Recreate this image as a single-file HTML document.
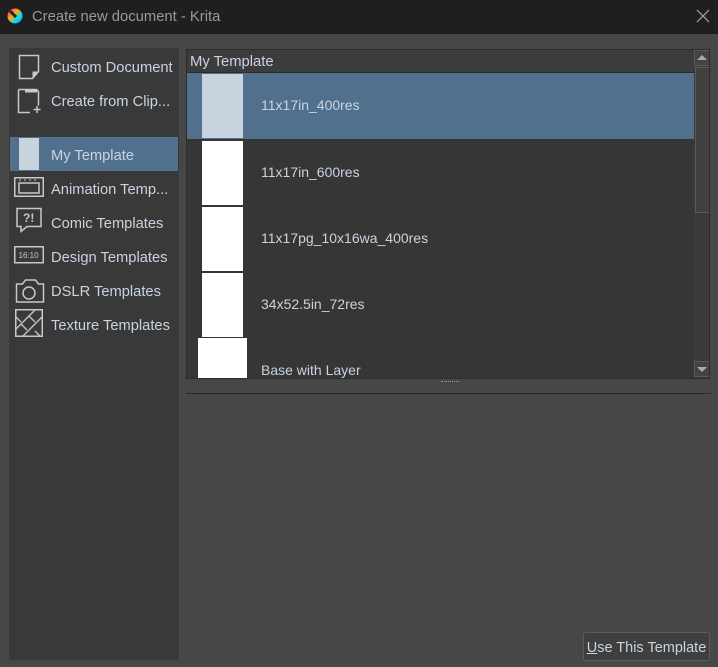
<!DOCTYPE html>
<html><head><style>
*{margin:0;padding:0;box-sizing:border-box}
body{width:718px;height:667px;background:#474747;font-family:"Liberation Sans",sans-serif;font-size:14px;color:#c9d4e0;position:relative;overflow:hidden}
.a{position:absolute}
.title{left:0;top:0;width:718px;height:34px;background:#1f1f1f}
.ttext{left:32px;top:9px;color:#9a9a9a;font-size:14.8px}
.left{left:9px;top:48px;width:170px;height:612px;background:#393939}
.item{position:absolute;left:42px;font-size:14.7px;color:#c9d4e0;margin-top:1px}
.ic{position:absolute}
.list{left:186px;top:49px;width:524px;height:330px;background:#363636;border:1px solid #2c2c2c;overflow:hidden}
.hdr{left:0;top:0;width:508px;height:23px;background:#3c3c3c;border-bottom:1px solid #2a2a2a;padding:4px 3px 0;color:#c9d4e0;font-size:14.8px}
.row{position:absolute;left:0;width:507px;height:66px}
.thumb{position:absolute;left:15px;top:1px;width:41px;height:64px;background:#fff}
.lbl{position:absolute;left:74px;top:24px;color:#c9d4e0}
</style></head><body>
<div class="a title"></div>
<svg class="a" style="left:7px;top:8px" width="16" height="16" viewBox="0 0 16 16"><defs><linearGradient id="g" x1="0" y1="0" x2="1" y2="1"><stop offset="0" stop-color="#f0e"/><stop offset=".4" stop-color="#fa0"/><stop offset=".7" stop-color="#0df"/><stop offset="1" stop-color="#36f"/></linearGradient></defs><circle cx="8" cy="8" r="7.5" fill="url(#g)"/><path d="M3 3 L9 9" stroke="#222" stroke-width="3"/></svg>
<div class="a ttext">Create new document - Krita</div>
<svg class="a" style="left:696px;top:9px" width="14" height="14"><path d="M1 1L13 13M13 1L1 13" stroke="#aaa" stroke-width="1.2"/></svg>

<div class="a left">
<svg class="ic" style="left:9px;top:6px" width="22" height="26"><path d="M1.5 1.5h19v16l-6 7h-13z" fill="none" stroke="#c8c8c8" stroke-width="1.5"/><path d="M20.5 17.5h-6v7" fill="#c8c8c8"/></svg>
<div class="item" style="top:11px">Custom Document</div>
<svg class="ic" style="left:8px;top:40px" width="26" height="26"><path d="M1.5 1.5h18l2 2v14M13 24.5h-11.5v-23" fill="none" stroke="#c8c8c8" stroke-width="1.5"/><path d="M8 1.5h12v3h-12z" fill="#c8c8c8"/><path d="M20 18v7M16.5 21.5h7" stroke="#c8c8c8" stroke-width="1.5"/></svg>
<div class="item" style="top:45px">Create from Clip...</div>
<div class="a" style="left:1px;top:89px;width:168px;height:34px;background:#51708e"></div>
<div class="a" style="left:10px;top:90px;width:20px;height:32px;background:#c8d3de"></div>
<div class="item" style="top:99px">My Template</div>
<svg class="ic" style="left:5px;top:129px" width="30" height="20"><rect x=".75" y=".75" width="28.5" height="18.5" fill="none" stroke="#c8c8c8" stroke-width="1.5"/><rect x="5" y="6" width="20" height="10" fill="none" stroke="#c8c8c8" stroke-width="1.5"/><path d="M5 3h2M10 3h2M15 3h2M20 3h2" stroke="#c8c8c8"/></svg>
<div class="item" style="top:133px">Animation Temp...</div>
<svg class="ic" style="left:6px;top:159px" width="28" height="28"><path d="M2 1.5h24v18h-14l-6 5v-5h-4z" fill="none" stroke="#c8c8c8" stroke-width="1.5"/><text x="8" y="15" font-family="Liberation Sans" font-weight="bold" font-size="12" fill="#c8c8c8">?!</text></svg>
<div class="item" style="top:167px">Comic Templates</div>
<svg class="ic" style="left:5px;top:198px" width="30" height="18"><rect x=".75" y=".75" width="28.5" height="16" fill="none" stroke="#c8c8c8" stroke-width="1.5"/><text x="4.5" y="12" font-family="Liberation Sans" font-size="8" fill="#c8c8c8">16:10</text></svg>
<div class="item" style="top:201px">Design Templates</div>
<svg class="ic" style="left:6px;top:230px" width="30" height="26"><path d="M1.5 6h6l3-4h10l3 4h5v18h-27z" fill="none" stroke="#c8c8c8" stroke-width="1.5"/><circle cx="14" cy="15" r="6" fill="none" stroke="#c8c8c8" stroke-width="1.5"/></svg>
<div class="item" style="top:235px">DSLR Templates</div>
<svg class="ic" style="left:6px;top:261px" width="28" height="28"><rect x=".75" y=".75" width="26.5" height="26.5" fill="none" stroke="#c8c8c8" stroke-width="1.5"/><path d="M1 20L20 1M8 27L27 8M6 15l6 6M14 7l6 6M1 8l5 5M20 22l5 5" stroke="#c8c8c8" stroke-width="1.3"/></svg>
<div class="item" style="top:269px">Texture Templates</div>
</div>

<div class="a list">
<div class="a hdr">My Template</div>
<div class="row" style="top:23px;background:#51708e"><div class="thumb" style="background:#c8d3de"></div><div class="lbl">11x17in_400res</div></div>
<div class="row" style="top:90px"><div class="thumb"></div><div class="lbl">11x17in_600res</div></div>
<div class="row" style="top:156px"><div class="thumb"></div><div class="lbl">11x17pg_10x16wa_400res</div></div>
<div class="row" style="top:222px"><div class="thumb"></div><div class="lbl">34x52.5in_72res</div></div>
<div class="row" style="top:288px"><div class="thumb" style="left:11px;width:49px;height:60px;top:0"></div><div class="lbl">Base with Layer</div></div>
<div class="a" style="left:507px;top:0;width:16px;height:328px;background:#3a3a3a"></div>
<div class="a" style="left:507px;top:0;width:16px;height:16px;border:1px solid #5a5a5a;background:#434343"></div>
<div class="a" style="left:510px;top:5px;width:0;height:0;border-left:5px solid transparent;border-right:5px solid transparent;border-bottom:5px solid #aaa"></div>
<div class="a" style="left:508px;top:17px;width:15px;height:146px;border:1px solid #5a5a5a;background:#404040"></div>
<div class="a" style="left:507px;top:311px;width:16px;height:16px;border:1px solid #5a5a5a;background:#434343"></div>
<div class="a" style="left:510px;top:317px;width:0;height:0;border-left:5px solid transparent;border-right:5px solid transparent;border-top:5px solid #aaa"></div>
</div>
<div class="a" style="left:441px;top:381px;width:18px;height:0;border-top:1px dotted #999"></div>
<div class="a" style="left:186px;top:393px;width:525px;height:1px;background:#2a2a2a"></div>
<div class="a" style="left:583px;top:632px;width:127px;height:29px;border:1px solid #5c5c5c;border-radius:3px;background:#3f3f3f;color:#c9d4e0;padding-top:7px;text-align:center;font-size:14.5px"><u>U</u>se This Template</div>
</body></html>
